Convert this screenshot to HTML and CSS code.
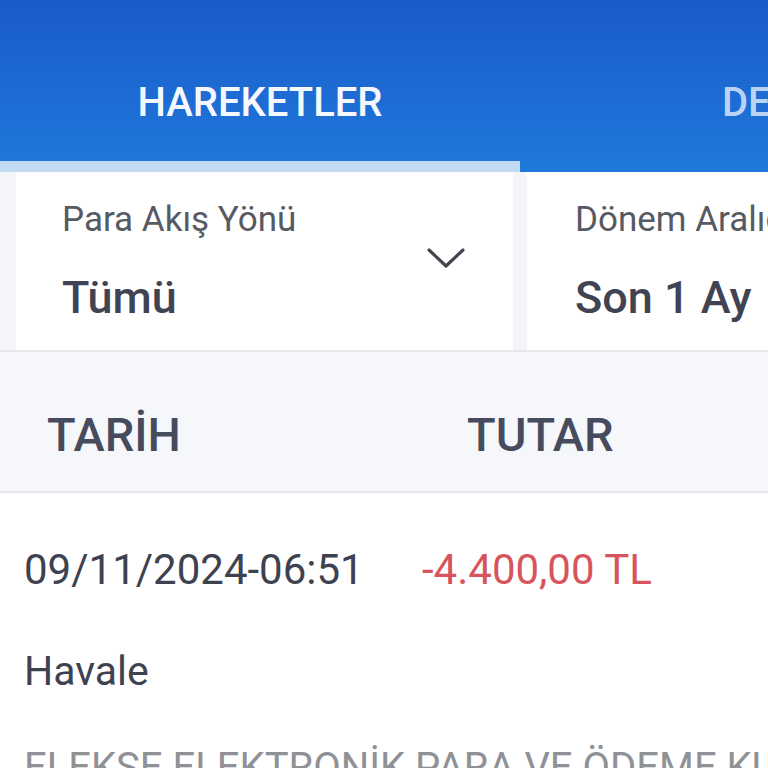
FILE: index.html
```html
<!DOCTYPE html>
<html lang="tr">
<head>
  <meta charset="UTF-8" />
  <title>Hesap Hareketleri</title>
  <link rel="stylesheet" href="styles.css">
</head>
<body>

  <div class="header">
    <div class="tabs">
      <div class="tab active">HAREKETLER</div>
      <div class="tab other">DEKONTLAR</div>
    </div>
  </div>

  <div class="filters">
    <div class="filter-card first">
      <div class="filter-text">
        <div class="filter-label">Para Akış Yönü</div>
        <div class="filter-value">Tümü</div>
      </div>
      <svg class="chevron" width="38" height="22" viewBox="0 0 38 22">
        <path d="M2 3 L19 19 L36 3" fill="none" stroke="#43464f" stroke-width="3.2" stroke-linecap="round" stroke-linejoin="round"/>
      </svg>
    </div>
    <div class="filter-card second">
      <div class="filter-text">
        <div class="filter-label">Dönem Aralığı</div>
        <div class="filter-value">Son 1 Ay</div>
      </div>
    </div>
  </div>

  <div class="table-head">
    <div class="col-date">TARİH</div>
    <div class="col-amount">TUTAR</div>
  </div>

  <div class="tx">
    <div class="tx-top">
      <div class="tx-date">09/11/2024-06:51</div>
      <div class="tx-amount">-4.400,00 TL</div>
    </div>
    <div class="tx-type">Havale</div>
    <div class="tx-desc">ELEKSE ELEKTRONİK PARA VE ÖDEME KURULUŞU A.Ş.</div>
  </div>

</body>
</html>
```

FILE: styles.css
```css
body {
  margin: 0;
  font-family: Roboto, "Liberation Sans", sans-serif;
  background: #ffffff;
  width: 768px;
  height: 768px;
  overflow: hidden;
}
.header {
  height: 172px;
  background: linear-gradient(to bottom, #1a5bca 0%, #1d6bd3 55%, #1f79da 100%);
}
.tabs {
  display: flex;
  height: 172px;
  overflow: hidden;
}
.tab {
  box-sizing: border-box;
  height: 172px;
  padding-top: 80px;
  font-size: 40px;
  line-height: 46px;
  font-weight: 500;
  white-space: nowrap;
  flex-shrink: 0;
}
.tab.active {
  width: 520px;
  text-align: center;
  color: #f5f9ff;
  border-bottom: 11px solid #c3daf5;
}
.tab.other {
  padding-left: 202px;
  color: #b8d3f3;
}
.filters {
  display: flex;
  gap: 14px;
  padding-left: 16px;
  height: 178px;
  background: #f3f5f8;
  border-bottom: 2px solid #e5e7eb;
}
.filter-card {
  background: #ffffff;
  display: flex;
  align-items: center;
  justify-content: space-between;
}
.filter-card.first {
  width: 497px;
  flex-shrink: 0;
  padding-left: 46px;
  box-sizing: border-box;
}
.filter-card.second {
  flex: 1;
  padding-left: 48px;
  overflow: hidden;
  white-space: nowrap;
}
.filter-text {
  align-self: flex-start;
  padding-top: 28px;
}
.filter-label {
  font-size: 35px;
  line-height: 40px;
  color: #565a63;
}
.filter-value {
  margin-top: 30px;
  font-size: 45px;
  line-height: 56px;
  font-weight: 500;
  color: #3f4352;
}
.chevron {
  margin-right: 48px;
  margin-top: -6px;
}
.table-head {
  display: flex;
  height: 141px;
  box-sizing: border-box;
  padding: 55px 0 0 47px;
  background: #f6f7fa;
  border-bottom: 2px solid #e6e8eb;
  font-size: 47px;
  line-height: 56px;
  font-weight: 500;
  color: #474b5e;
}
.col-date {
  width: 420px;
}
.tx {
  padding: 52px 0 0 24px;
  white-space: nowrap;
  overflow: hidden;
}
.tx-top {
  display: flex;
  font-size: 42px;
  line-height: 50px;
}
.tx-date {
  width: 398px;
  color: #3e4250;
}
.tx-amount {
  color: #d6555c;
}
.tx-type {
  margin-top: 51px;
  font-size: 41px;
  line-height: 50px;
  color: #3e4250;
}
.tx-desc {
  margin-top: 47px;
  font-size: 40px;
  line-height: 50px;
  color: #8e9196;
}
```
